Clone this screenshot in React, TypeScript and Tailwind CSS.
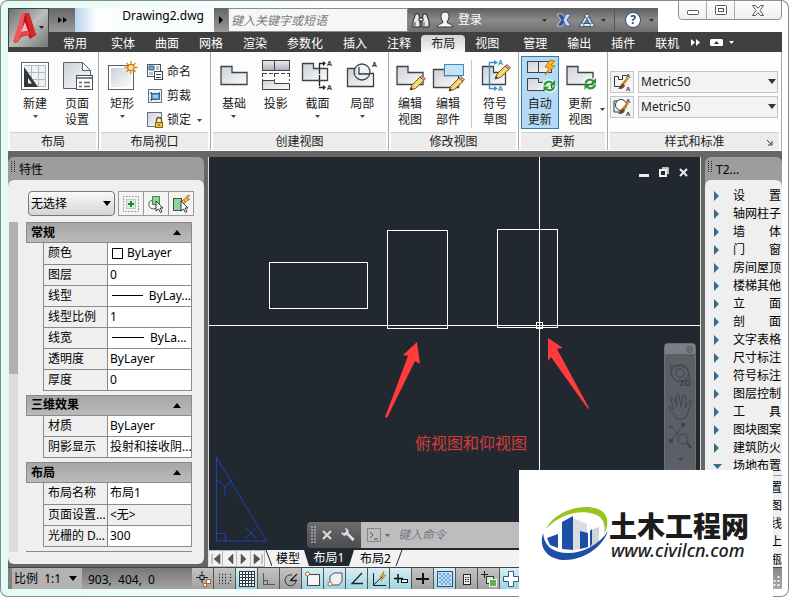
import type { ReactNode } from 'react';

// Tab groups of the ribbon; each group is set off by a small gap.
const TAB_GROUPS = [
  ['常用'],
  ['实体', '曲面', '网格', '渲染', '参数化', '插入', '注释', '布局', '视图'],
  ['管理', '输出', '插件', '联机'],
];
const ACTIVE_TAB = '布局';

interface Prop {
  name: string;
  value: string;
  mark?: 'box' | 'line';
  readOnly?: boolean;
}

const PROPERTY_GROUPS: { title: string; rows: Prop[] }[] = [
  {
    title: '常规',
    rows: [
      { name: '颜色', value: 'ByLayer', mark: 'box' },
      { name: '图层', value: '0' },
      { name: '线型', value: 'ByLay...', mark: 'line' },
      { name: '线型比例', value: '1' },
      { name: '线宽', value: 'ByLa...', mark: 'line' },
      { name: '透明度', value: 'ByLayer' },
      { name: '厚度', value: '0' },
    ],
  },
  {
    title: '三维效果',
    rows: [
      { name: '材质', value: 'ByLayer' },
      { name: '阴影显示', value: '投射和接收阴...' },
    ],
  },
  {
    title: '布局',
    rows: [
      { name: '布局名称', value: '布局1' },
      { name: '页面设置...', value: '<无>', readOnly: true },
      { name: '光栅的 D...', value: '300' },
    ],
  },
];

const TOOL_MENU = [
  '设置', '轴网柱子', '墙体', '门窗', '房间屋顶', '楼梯其他', '立面', '剖面',
  '文字表格', '尺寸标注', '符号标注', '图层控制', '工具', '图块图案', '建筑防火',
];
const SUB_MENU = ['置', '图', '线', '上', '瓶'];

function Caret({ className = 'fill-[#333]', up = false }: { className?: string; up?: boolean }) {
  return (
    <svg width="8" height="5" viewBox="0 0 8 5" className={className} aria-hidden="true">
      <path d={up ? 'M0 5h8L4 0z' : 'M0 0h8L4 5z'} />
    </svg>
  );
}

function SmallCaret({ className = 'fill-[#444]' }: { className?: string }) {
  return (
    <svg width="5" height="3" viewBox="0 0 5 3" className={className} aria-hidden="true">
      <path d="M0 0h5L2.5 3z" />
    </svg>
  );
}

/* ---------- ribbon icons ---------- */

function Icon({ children, size = 32 }: { children: ReactNode; size?: number }) {
  return (
    <svg width={size} height={size} viewBox={`0 0 ${size} ${size}`} fill="none" className="shrink-0 overflow-visible" aria-hidden="true">
      {children}
    </svg>
  );
}

function Block({ d }: { d: string }) {
  return <path d={d} fill="url(#steel)" stroke="#3f4348" strokeWidth="1.3" />;
}

function Pencil({ x, y }: { x: number; y: number }) {
  return (
    <g transform={`translate(${x} ${y})`}>
      <path d="M0 14l2-5L10 1l4 3.500-8.500 8z" fill="#f3cf62" stroke="#7a5a22" />
      <path d="M10 1l2-1.500 3.500 3L14 4.500z" fill="#d9a0a8" stroke="#7a5a22" strokeWidth=".8" />
      <path d="M4 10.500L12 3" stroke="#fdf0b4" />
      <path d="M0 14l1-3 2 2z" fill="#333" />
    </g>
  );
}

function Refresh({ x, y }: { x: number; y: number }) {
  return (
    <g transform={`translate(${x} ${y})`}>
      <path d="M1 5.500C1.500 1 7 0 10 3.500M11.500 6.500C11 11 5.500 12 2.500 8.500" stroke="#fff" strokeWidth="4" />
      <path d="M1.500 5.500C2 1.500 7 .5 9.500 3.500M11 6.500C10.500 10.500 5.500 11.500 3 8.500" stroke="#2d9a3a" strokeWidth="2.200" />
      <path d="M12 0v5.500H6.500zM.5 12V6.500H6z" fill="#2d9a3a" />
    </g>
  );
}

function Letter({ x, y, fill = '#33373b' }: { x: number; y: number; fill?: string }) {
  return (
    <text x={x} y={y} fontSize="7" fontWeight="700" fill={fill}>
      A
    </text>
  );
}

const NewLayoutIcon = () => (
  <Icon>
    <rect x="2.500" y="2.500" width="27" height="27" fill="#fff" stroke="#5b6066" />
    <rect x="5" y="5" width="22" height="22" fill="#f0f1f3" />
    <path d="M12.500 5v22M19.500 5v22M26.500 5v22M5 5.500h22M5 12.500h22M5 19.500h22M5 26.500h22" stroke="#b4b9c0" />
    <path d="M5 7v20h14z" fill="#33383e" />
    <path d="M9 18v5.500h4z" fill="#eef0f2" />
  </Icon>
);

const PageSetupIcon = () => (
  <Icon>
    <path d="M2.500 2.500h19l8 8v18h-27z" fill="url(#steel)" stroke="#5b6066" />
    <path d="M21.500 2.500v8h8z" fill="#fff" stroke="#5b6066" />
    <rect x="15.500" y="15.500" width="16" height="14" fill="#fff" stroke="#4a5058" />
    <path d="M16 17h15v2H16z" fill="#7d8590" />
    <path d="M18 22.500h3M18 26.500h3M23 22.500h6M23 26.500h6" stroke="#5b6570" strokeWidth="1.500" />
  </Icon>
);

const RectangleIcon = () => (
  <Icon>
    <rect x="2.500" y="5.500" width="25" height="24" fill="#fff" stroke="#5b6066" />
    <rect x="5" y="8" width="20" height="19" fill="url(#steel)" />
    <path d="M25 1v13M18.500 7.500h13M20.400 3l9.200 9M29.600 3l-9.200 9" stroke="#d98b1f" strokeWidth="1.300" />
    <circle cx="25" cy="7.500" r="3.200" fill="#ffe08a" stroke="#d07a14" strokeWidth="1.200" />
  </Icon>
);

const BaseIcon = () => (
  <Icon>
    <Block d="M3 6.500h11v6h15v12H3z" />
  </Icon>
);

const ProjectIcon = () => (
  <Icon>
    <rect x="2.500" y=".5" width="27" height="10" fill="url(#band)" stroke="#3f4348" />
    <path d="M14.500 1v9" stroke="#3f4348" />
    <path d="M3 13.500h26M2.500 13v8M29.500 13v8M14.500 13v7" stroke="#3f4348" strokeDasharray="4 2" />
    <path d="M2.500 20.500h12v3h15v6h-27z" fill="url(#steel)" stroke="#3f4348" />
  </Icon>
);

const SectionIcon = () => (
  <Icon>
    <Block d="M1.500 3.500h11v5h14v12h-25z" />
    <path d="M18.500 3v25" stroke="#222" strokeDasharray="5 1" strokeWidth="1.300" />
    <path d="M18 3.500h5M18 27.500h5" stroke="#222" strokeWidth="1.300" />
    <path d="M22 1l3 2.500-3 2.500zM22 25l3 2.500-3 2.500z" fill="#222" />
    <Letter x={26} y={6} />
    <Letter x={26} y={30} />
  </Icon>
);

const DetailIcon = () => (
  <Icon>
    <Block d="M1.500 8.500h8v5h18v13h-26z" />
    <circle cx="16" cy="12" r="8" fill="#eef0f3" fillOpacity=".8" stroke="#3f4348" strokeWidth="1.300" />
    <path d="M13 7v7h10" stroke="#3f4348" strokeWidth="1.300" />
    <Letter x={26} y={7} />
  </Icon>
);

const EditViewIcon = () => (
  <Icon>
    <Block d="M3 6.500h11v6h15v12H3z" />
    <Pencil x={16} y={16} />
  </Icon>
);

const EditPartIcon = () => (
  <Icon>
    <Block d="M1.500 9.500h11v6h14v12h-25z" />
    <rect x="12.500" y="4.500" width="19" height="11" fill="#c2e4f6" stroke="#3a8fb7" />
    <Pencil x={17} y={17} />
  </Icon>
);

const SymbolSketchIcon = () => (
  <Icon>
    <Block d="M3.500 6.500h11v6h12v12h-23z" />
    <path d="M16 2.500h-5.500v26H16" stroke="#3a95b8" strokeWidth="1.400" />
    <path d="M15 0l4 2.500-4 2.500zM15 26l4 2.500-4 2.500z" fill="#3a95b8" />
    <Letter x={19} y={5} fill="#3a95b8" />
    <Letter x={19} y={31} fill="#3a95b8" />
    <Pencil x={16} y={5} />
  </Icon>
);

const AutoUpdateIcon = () => (
  <Icon>
    <rect x="3.500" y="1.500" width="24" height="11" fill="url(#steel)" stroke="#3f4348" />
    <path d="M14.500 2v10" stroke="#3f4348" />
    <path d="M3.500 18.500h11v4h13v8h-24z" fill="url(#steel)" stroke="#3f4348" />
    <path d="M26 0l-5 7 4 1-4 7 10-9-4-1 4-4z" fill="#ffb21e" stroke="#b06a10" strokeWidth=".8" />
    <Refresh x={19} y={20} />
  </Icon>
);

const UpdateViewIcon = () => (
  <Icon>
    <Block d="M3 6.500h11v6h15v12H3z" />
    <Refresh x={20} y={18} />
  </Icon>
);

const NamedIcon = () => (
  <Icon size={16}>
    <rect x=".5" y=".5" width="13" height="12" fill="#fff" stroke="#4d545c" />
    <path d="M2 2h5v4H2z" fill="#5fb4e0" stroke="#2f5f88" />
    <path d="M9 2h3v4H9zM2 8h4v3H2z" fill="#b8bfc8" />
    <rect x="7.500" y="7.500" width="8" height="8" fill="#fff" stroke="#3f464e" />
    <path d="M9 10.500h5M9 13.500h5" stroke="#3f464e" />
  </Icon>
);

const ClipIcon = () => (
  <Icon size={16}>
    <rect x="1.500" y="1.500" width="13" height="13" fill="#eef1f4" stroke="#6a7078" />
    <path d="M3 5.500h10M3 11.500h8M4.500 4v9M12.500 4v8" stroke="#2f6a94" />
    <rect x="5" y="6" width="7" height="5" fill="#8fd0ee" stroke="#2f6a94" />
  </Icon>
);

const LockIcon = () => (
  <Icon size={16}>
    <rect x=".5" y=".5" width="14" height="14" fill="url(#steel)" stroke="#6a7078" />
    <path d="M9.500 10V8a2.500 2.500 0 0 1 5 0v2" stroke="#6b5a1c" strokeWidth="1.300" />
    <rect x="8.500" y="10.500" width="7" height="5" fill="#f2c53a" stroke="#7d6415" />
    <path d="M12 12v2" stroke="#4d3c08" />
  </Icon>
);

function StyleIcon({ round }: { round?: boolean }) {
  return (
    <Icon size={20}>
      {round ? (
        <>
          <path d="M2 4h4M2 4v11h6" stroke="#33373b" />
          <circle cx="9" cy="8" r="5.500" stroke="#33373b" fill="#fff" />
        </>
      ) : (
        <path d="M2.500 4.500h4v3h4v-4h4M2.500 4.500v10h6" stroke="#33373b" />
      )}
      <text x="14" y="6" fontSize="6" fontWeight="700" fill="#33373b">A</text>
      <text x="14" y="19" fontSize="6" fontWeight="700" fill="#33373b">A</text>
      <path d="M16 6l-6 7" stroke="#c5862b" strokeWidth="2.500" />
      <path d="M11 11.500l2 2c-1 3-4 4-7 3 2-1 2-4 5-5z" fill="#6e4a22" />
    </Icon>
  );
}

/* ---------- ribbon ---------- */

interface BigButtonProps {
  icon: ReactNode;
  lines: string[];
  menu?: boolean;
  className?: string;
}

function BigButton({ icon, lines, menu, className = 'w-[42px]' }: BigButtonProps) {
  return (
    <button className={`flex flex-col items-center ${className}`}>
      <span className="mb-1">{icon}</span>
      {lines.map((l) => (
        <span key={l} className="h-4 leading-4">
          {l}
        </span>
      ))}
      {menu && (
        <span className="flex h-4 items-center pb-2">
          <SmallCaret />
        </span>
      )}
    </button>
  );
}

function Panel({ title, className, launcher, children }: { title: string; className: string; launcher?: boolean; children: ReactNode }) {
  return (
    <section className={`flex shrink-0 flex-col border-r border-[#a9a9a9] px-0.5 ${className}`}>
      <div className="flex h-20 items-start pt-2">{children}</div>
      <h2 className="relative h-[18px] border-t border-[#cfcfcf] bg-[#ececec] text-center leading-[18px]">
        {title}
        {launcher && (
          <svg width="7" height="7" viewBox="0 0 7 7" className="absolute right-1.5 top-1.5" aria-hidden="true">
            <path d="M1 1l4 4M6 2v4H2" fill="none" stroke="#333" />
          </svg>
        )}
      </h2>
    </section>
  );
}

function SmallCommand({ icon, label, menu }: { icon: ReactNode; label: string; menu?: boolean }) {
  return (
    <button className="flex h-6 items-center">
      {icon}
      <span className="ml-1">{label}</span>
      {menu && (
        <span className="ml-1.5">
          <SmallCaret />
        </span>
      )}
    </button>
  );
}

function StyleRow({ label, round }: { label: string; round?: boolean }) {
  return (
    <div className="flex h-[22px] gap-1">
      <button aria-label={label} className="flex w-6 items-center justify-center border border-[#c4c4c4] bg-[#f4f4f4]">
        <StyleIcon round={round} />
      </button>
      <div className="relative flex-1">
        <select aria-label={label} className="h-full w-full appearance-none border border-[#c4c4c4] bg-[#f3f3f3] pl-0.5">
          <option>Metric50</option>
        </select>
        <span className="pointer-events-none absolute right-0.5 top-2 flex">
          <Caret />
        </span>
      </div>
    </div>
  );
}

function Ribbon() {
  return (
    <div className="flex bg-[#fdfdfd] pb-px text-[#222]">
      <Panel title="布局" className="w-[91px]">
        <div className="flex pl-1">
          <BigButton icon={<NewLayoutIcon />} lines={['新建']} menu />
          <BigButton icon={<PageSetupIcon />} lines={['页面', '设置']} />
        </div>
      </Panel>
      <Panel title="布局视口" className="w-28">
        <BigButton icon={<RectangleIcon />} lines={['矩形']} menu />
        <div className="ml-1 flex flex-col">
          <SmallCommand icon={<NamedIcon />} label="命名" />
          <SmallCommand icon={<ClipIcon />} label="剪裁" />
          <SmallCommand icon={<LockIcon />} label="锁定" menu />
        </div>
      </Panel>
      <Panel title="创建视图" className="w-[178px]">
        <BigButton icon={<BaseIcon />} lines={['基础']} menu />
        <BigButton icon={<ProjectIcon />} lines={['投影']} />
        <BigButton icon={<SectionIcon />} lines={['截面']} menu />
        <BigButton icon={<DetailIcon />} lines={['局部']} menu className="w-12" />
      </Panel>
      <Panel title="修改视图" className="w-[130px]">
        <BigButton icon={<EditViewIcon />} lines={['编辑', '视图']} className="w-[38px]" />
        <BigButton icon={<EditPartIcon />} lines={['编辑', '部件']} className="w-[38px]" />
        <span className="mx-1 h-[68px] border-l border-[#c8c8c8]" />
        <BigButton icon={<SymbolSketchIcon />} lines={['符号', '草图']} className="w-[38px]" />
      </Panel>
      <Panel title="更新" className="w-[89px]">
        <BigButton
          icon={<AutoUpdateIcon />}
          lines={['自动', '更新']}
          className="-mt-1 h-[73px] w-[38px] border border-[#2f7fa6] bg-[#b5daf5] pt-[3px]"
        />
        <BigButton icon={<UpdateViewIcon />} lines={['更新', '视图']} className="ml-0.5 w-10" />
        <span className="mt-12">
          <SmallCaret />
        </span>
      </Panel>
      <Panel title="样式和标准" className="min-w-0 flex-1 shrink" launcher>
        <div className="flex flex-1 flex-col gap-[3px] pr-px pt-[11px]">
          <StyleRow label="截面视图样式" />
          <StyleRow label="局部视图样式" round />
        </div>
      </Panel>
    </div>
  );
}

/* ---------- header ---------- */

function InfoBar() {
  return (
    <div className="flex h-6 w-[250px] shrink-0 items-center bg-linear-to-b from-[#5f5f5f] via-[#8a8a8a] to-[#707070] pl-1 text-white">
      <button aria-label="搜索">
        <svg width="18" height="16" viewBox="0 0 18 16" aria-hidden="true">
          <path d="M3 2h4v2l1 3v8H1V9l2-5zM11 2h4v2l2 5v6h-7V7l1-3z" fill="#e8e8e8" stroke="#222" />
          <path d="M7 6h4v3H7z" fill="#e8e8e8" stroke="#222" />
          <path d="M3 10v4M12 10v4" stroke="#444" />
        </svg>
      </button>
      <button className="ml-1.5 flex items-center gap-1">
        <svg width="18" height="18" viewBox="0 0 18 18" aria-hidden="true">
          <path d="M9 1c3 0 4 2 4 4.500S11.500 10 11 11c0 2 5 1.500 6 5H1c1-3.500 6-3 6-5-.5-1-2-3-2-5.500S6 1 9 1z" fill="#f4f6f8" stroke="#333" />
        </svg>
        登录
      </button>
      <span className="ml-[60px]">
        <SmallCaret className="fill-[#333]" />
      </span>
      <button aria-label="Exchange" className="ml-2.5">
        <svg width="14" height="14" viewBox="0 0 14 14" aria-hidden="true">
          <path d="M0 1h5l3 4v4l-3 4H0l4-6z" fill="#2d4f9e" stroke="#fff" strokeWidth=".6" />
          <path d="M14 1H9L6 7l3 6h5l-4-6z" fill="#c9d9f5" stroke="#2d4f9e" strokeWidth=".8" />
        </svg>
      </button>
      <button aria-label="连接" className="ml-2 flex items-center gap-1.5">
        <svg width="16" height="15" viewBox="0 0 16 15" aria-hidden="true">
          <path d="M8 3L3 12h10z" fill="none" stroke="#2f4a70" strokeWidth="3.500" />
          <path d="M8 3L3 12h10z" fill="none" stroke="#e4eefb" strokeWidth="1.800" />
          <circle cx="8" cy="3" r="2" fill="#e4eefb" stroke="#2f4a70" strokeWidth=".8" />
          <circle cx="3" cy="12" r="2" fill="#e4eefb" stroke="#2f4a70" strokeWidth=".8" />
          <circle cx="13" cy="12" r="2" fill="#e4eefb" stroke="#2f4a70" strokeWidth=".8" />
        </svg>
        <SmallCaret className="fill-[#333]" />
      </button>
      <span className="mx-2 h-5 border-l border-[#555]" />
      <button aria-label="帮助" className="ml-0.5 flex items-center gap-2">
        <span className="flex size-4 items-center justify-center rounded-full border border-[#2c4c74] bg-white text-xs font-bold leading-3 text-[#23528c]">
          ?
        </span>
        <SmallCaret className="fill-[#333]" />
      </button>
    </div>
  );
}

function WindowControls() {
  const cls = 'flex items-center justify-center';
  return (
    <div className="ml-5 flex h-5 w-[104px] shrink-0 self-start rounded-b border border-[#8f8f8f] bg-linear-to-b from-[#fdfdfd] to-[#f0f0f0]">
      <button aria-label="最小化" className={`${cls} w-7 border-r border-[#aaa]`}>
        <svg width="12" height="5" viewBox="0 0 12 5" className="mt-1"><rect x=".5" y=".5" width="11" height="4" rx="1" fill="#fff" stroke="#555" /></svg>
      </button>
      <button aria-label="最大化" className={`${cls} w-7 border-r border-[#aaa]`}>
        <svg width="12" height="10" viewBox="0 0 12 10">
          <rect x=".5" y=".5" width="11" height="9" rx="1" fill="#fff" stroke="#555" />
          <rect x="3.500" y="3.500" width="5" height="3" fill="#fff" stroke="#555" />
        </svg>
      </button>
      <button aria-label="关闭" className={`${cls} flex-1`}>
        <svg width="12" height="11" viewBox="0 0 12 11">
          <path d="M.5.5h3L6 3.300 8.500.5h3L8 5.500l3.500 5h-3L6 7.700 3.500 10.500h-3L4 5.500z" fill="#fff" stroke="#555" />
        </svg>
      </button>
    </div>
  );
}

function Header() {
  return (
    <header className="flex">
      <div className="bg-linear-to-b from-transparent from-60% to-[#404040] to-60% pt-2">
        <button aria-label="应用程序菜单" className="flex h-10 w-[41px] items-center border border-[#444] bg-linear-to-br from-[#6f6f6f] via-[#bdbdbd] to-[#777] pb-px pl-1">
          <svg width="24" height="32" viewBox="0 0 24 32" className="shrink-0" aria-hidden="true">
            <path d="M9 1h7l7 22-6 4-2-4-7 2-3 5-4 1z" fill="#b3141c" />
            <path d="M9 1h3L9 19l-3 9-3 3-3-2z" fill="#f0565a" />
            <path d="M12 1h4l7 22-5 2z" fill="#d8262d" />
            <path d="M12 10l3 9-7 1z" fill="#f7b9b9" />
            <path d="M8 20l8-1 1 3-10 3z" fill="#ef4247" />
          </svg>
          <span className="ml-0.5">
            <SmallCaret className="fill-[#222]" />
          </span>
        </button>
      </div>
      <div className="flex min-w-0 flex-1 flex-col">
        <div className="flex h-8 items-end">
          <button aria-label="快速访问工具栏" className="flex h-6 w-[26px] items-center justify-center bg-linear-to-b from-[#666] to-[#999]">
            <svg width="9" height="6" viewBox="0 0 9 6"><path d="M0 0l4 3-4 3zM5 0l4 3-4 3z" fill="#000" /></svg>
          </button>
          <h1 className="h-6 min-w-0 flex-1 bg-linear-to-r from-[#b9d3ea] via-[#fbfdfe] via-15% to-[#f6fbfb] pr-2.5 text-right leading-4 text-black">Drawing2.dwg</h1>
          <button aria-label="展开" className="flex h-6 w-3.5 items-center justify-center bg-linear-to-b from-[#666] to-[#999]">
            <svg width="4" height="8" viewBox="0 0 4 8"><path d="M0 0l4 4-4 4z" fill="#000" /></svg>
          </button>
          <input
            aria-label="搜索"
            placeholder="键入关键字或短语"
            className="h-6 w-[180px] border border-[#8c8c8c] bg-[#f6f6f6] px-0.5 italic placeholder:text-[#777]"
          />
          <InfoBar />
          <WindowControls />
        </div>
        <nav className="flex h-5 gap-1 bg-[#404040] pl-1 text-white">
          {TAB_GROUPS.map((group) => (
            <div key={group[0]} className="flex items-end">
              {group.map((tab) => (
                <button
                  key={tab}
                  className={
                    tab === ACTIVE_TAB
                      ? 'h-[17px] rounded-t-sm bg-linear-to-b from-[#d2d2d2] to-[#fafafa] px-2.5 leading-[18px] text-[#222]'
                      : 'h-[17px] px-2.5 leading-[18px]'
                  }
                >
                  {tab}
                </button>
              ))}
            </div>
          ))}
          <div className="-ml-1.5 flex items-center gap-2.5 pl-1">
            <svg width="9" height="7" viewBox="0 0 9 7" className="fill-white"><path d="M0 0l4 3.500L0 7zM5 0l4 3.500L5 7z" /></svg>
            <svg width="13" height="7" viewBox="0 0 13 7"><rect width="13" height="7" rx="1.500" fill="#fff" /><path d="M4 5h5L6.500 2z" fill="#333" /></svg>
            <SmallCaret className="-ml-1 fill-white" />
          </div>
        </nav>
      </div>
    </header>
  );
}

/* ---------- palettes ---------- */

function PaletteTitle({ children }: { children: ReactNode }) {
  return (
    <div className="-mb-1 flex h-[27px] items-start rounded-t-md bg-[#9d9d9d] px-[3px] pt-1 text-black">
      <svg width="4" height="12" viewBox="0 0 4 12" aria-hidden="true">
        <path d="M.5 0v12M3.500 0v12" stroke="#222" strokeDasharray="1 1" />
      </svg>
      <h2 className="ml-1 leading-[18px]">{children}</h2>
    </div>
  );
}

function PropertyValue({ row }: { row: Prop }) {
  return (
    <span className="flex items-center whitespace-nowrap">
      {row.mark === 'box' && <span className="ml-0.5 mr-1 size-[11px] border border-black" />}
      {row.mark === 'line' && <span className="ml-0.5 mr-1.5 w-8 border-t border-black" />}
      {row.value}
    </span>
  );
}

function SelectionButton({ label, children }: { label: string; children: ReactNode }) {
  return (
    <button aria-label={label} className="flex flex-1 items-center justify-center border-r border-[#9a9a9a] last:border-r-0">
      <svg width="18" height="18" viewBox="0 0 18 18" fill="none" aria-hidden="true">
        {children}
      </svg>
    </button>
  );
}

function PropertiesPalette() {
  const cursor = 'M9 6v10l2.500-2 2 3.500 1.500-1-2-3.500h3z';
  return (
    <aside className="flex w-[196px] flex-col pb-[3px]">
      <PaletteTitle>特性</PaletteTitle>
      <div className="flex min-h-0 flex-1 flex-col rounded-md bg-[#efefef] pb-3 pt-[11px]">
        <div className="ml-5 flex h-[25px] gap-[3px]">
          <div className="relative w-[87px]">
            <select aria-label="选择对象" className="h-full w-full appearance-none rounded-sm border border-[#777] bg-linear-to-b from-[#fafafa] to-[#d4d4d4] pl-0.5 text-black">
              <option>无选择</option>
            </select>
            <span className="pointer-events-none absolute right-1 top-2.5 flex">
              <Caret className="fill-black" />
            </span>
          </div>
          <div className="flex w-[76px] border border-[#9a9a9a] bg-[#f4f4f4]">
            <SelectionButton label="切换 PICKADD">
              <rect x="1.500" y="1.500" width="15" height="15" stroke="#555" strokeDasharray="1 2" />
              <rect x="4.500" y="4.500" width="9" height="9" fill="#d8f0d8" stroke="#999" strokeDasharray="1 1" />
              <path d="M9 6v6M6 9h6" stroke="#1c8a32" strokeWidth="2" />
            </SelectionButton>
            <SelectionButton label="选择对象">
              <path d="M6 5a4.500 4.500 0 1 0 4 7" stroke="#555" />
              <rect x="5.500" y="1.500" width="7" height="8" fill="#8fd39b" stroke="#3f8f4c" />
              <path d={cursor} fill="#fff" stroke="#222" strokeWidth=".9" />
            </SelectionButton>
            <SelectionButton label="快速选择">
              <rect x="1.500" y="3.500" width="8" height="12" fill="#8fd39b" stroke="#3a5a40" />
              <path d="M16 0l-6 6h3l-3 4 8-6h-3l3-4z" fill="#f7b13a" stroke="#b06a10" strokeWidth=".7" />
              <path d={cursor} fill="#fff" stroke="#222" strokeWidth=".9" />
            </SelectionButton>
          </div>
        </div>
        <div className="mt-1.5 flex min-h-0 flex-1">
          <div className="ml-px w-[9px] shrink-0 bg-[#dcdcdc]">
            <div className="h-[46%] bg-[#b0b0b0]" />
          </div>
          <div className="ml-2 flex w-[166px] flex-col gap-1 overflow-hidden text-black">
            {PROPERTY_GROUPS.map((group) => (
              <section key={group.title}>
                <h3 className="flex h-[21px] items-center justify-between border border-[#8a8a8a] bg-linear-to-b from-[#a6a6a6] to-[#bababa] pl-1 pr-2.5 font-bold">
                  {group.title}
                  <Caret up className="fill-black" />
                </h3>
                <table className="ml-[17px] w-[149px] table-fixed border-collapse">
                  <tbody>
                    {group.rows.map((row) => (
                      <tr key={row.name} className="h-[21px]">
                        <th className="w-16 overflow-hidden whitespace-nowrap border border-t-0 border-[#8a8a8a] p-0 pl-1 text-left font-normal leading-4">
                          {row.name}
                        </th>
                        <td className={`overflow-hidden border border-t-0 border-[#8a8a8a] p-0 pl-0.5 leading-4 ${row.readOnly ? 'bg-[#efefef]' : 'bg-white'}`}>
                          <PropertyValue row={row} />
                        </td>
                      </tr>
                    ))}
                  </tbody>
                </table>
              </section>
            ))}
            <div className="h-[21px] shrink-0 border border-[#8a8a8a] bg-[#a6a6a6]" />
          </div>
        </div>
      </div>
    </aside>
  );
}

function MenuArrow({ open }: { open?: boolean }) {
  return (
    <span className="flex w-5 shrink-0">
      <svg width="9" height="10" viewBox="0 0 9 10" className="fill-[#3b6c86]" aria-hidden="true">
        <path d={open ? 'M0 3h9L4.500 8z' : 'M1 0l5 5-5 5z'} />
      </svg>
    </span>
  );
}

function ToolPalette() {
  const rowClass = 'flex h-[18px] w-full items-center pl-2 leading-4';
  return (
    <aside className="flex w-[77px] flex-col overflow-hidden">
      <PaletteTitle>T2...</PaletteTitle>
      <div className="min-h-0 flex-1 overflow-hidden rounded-t-md bg-[#efefef] pt-[7px] text-black">
        {TOOL_MENU.map((item) => (
          <button key={item} className={rowClass}>
            <MenuArrow />
            <span className="flex w-12 shrink-0 justify-between">
              {Array.from(item).map((c, i) => (
                <span key={i}>{c}</span>
              ))}
            </span>
          </button>
        ))}
        <button className={rowClass}>
          <MenuArrow open />
          <span className="shrink-0">场地布置</span>
        </button>
        <div className="border-t border-[#999] pt-[3px]">
          {SUB_MENU.map((item) => (
            <button key={item} className="block h-[18px] w-full text-right leading-4">
              {item}
            </button>
          ))}
        </div>
      </div>
    </aside>
  );
}

/* ---------- drawing area ---------- */

function Drawing() {
  return (
    <svg className="absolute inset-0 h-full w-full" fill="none" aria-hidden="true">
      <g stroke="#fff" shapeRendering="crispEdges">
        <rect x="60.500" y="105.500" width="98" height="46" />
        <rect x="178.500" y="73.500" width="60" height="98" />
        <rect x="288.500" y="72.500" width="60" height="98" />
        <path d="M0 168.500h3000M330.500 0v3000" />
        <rect x="327.500" y="165.500" width="6" height="6" />
      </g>
      <path d="M208 185l-14 13 5 1-23 61 2 1 28-57 5 3z" fill="#ff3b3b" />
      <path d="M339 181l15 10-6 1 32 59-1 1-37-52-3 4z" fill="#ff3b3b" />
      <g stroke="#1b41b8">
        <path d="M7.500 300v84h50z" />
        <path d="M7.500 376.500h9v8M7 322l9 8 8-8M16 330v8M36 370l12 12M48 370l-12 12" />
      </g>
    </svg>
  );
}

function NavigationBar() {
  return (
    <div className="absolute right-1 top-[186px] flex h-40 w-8 flex-col items-center rounded-t border border-[#6b6f75] bg-[#5b5f66]">
      <div className="flex h-2.5 w-full items-center justify-end bg-[#7b7e83] pr-0.5">
        <svg width="7" height="7" viewBox="0 0 7 7" fill="none" stroke="#4e5258"><circle cx="3.500" cy="3.500" r="3" /><path d="M2 2l3 3M5 2L2 5" /></svg>
      </div>
      <svg width="26" height="96" viewBox="0 0 26 96" fill="none" stroke="#41454b" className="mt-2">
        <path d="M2 4h12a8 8 0 0 1 8 8v5M4 4v9" />
        <circle cx="13" cy="11" r="8.500" />
        <circle cx="13" cy="11" r="4.500" />
        <text x="12" y="24" fontSize="9" fontWeight="700" fill="#41454b" stroke="none">2D</text>
        <path d="M8 54c-2-4-5-6-6-9 1-1 3 0 5 3L4 37c0-2 2-2 3 0l3 8-1-12c1-2 3-1 3 0l2 12 2-11c1-2 3-1 3 1l-1 11 4-7c2-1 3 0 2 2l-4 12-3 4H9z" />
        <path d="M3 64l10 10M16 63L4 79M3 64h3M3 64v3" />
        <rect x="14.500" y="61.500" width="3" height="3" fill="#41454b" />
        <rect x="2.500" y="77.500" width="3" height="3" fill="#41454b" />
        <circle cx="16" cy="77" r="5" />
        <path d="M20 81l4 5" strokeWidth="2.500" />
      </svg>
      <SmallCaret className="fill-[#41454b]" />
    </div>
  );
}

function CommandLine() {
  return (
    <div className="absolute bottom-0.5 left-[98px] right-0 flex h-[26px]">
      <div className="flex w-[54px] items-center rounded-l-sm bg-linear-to-b from-[#6d6d6f] to-[#4b4c4f] pl-1">
        <svg width="5" height="18" viewBox="0 0 5 18"><path d="M1 0v18M4 0v18" stroke="#aaa" strokeWidth="1.500" strokeDasharray="2 1" /></svg>
        <button aria-label="关闭" className="ml-1.5">
          <svg width="10" height="10" viewBox="0 0 10 10"><path d="M1 1l8 8M9 1L1 9" stroke="#ddd" strokeWidth="2" /></svg>
        </button>
        <button aria-label="自定义" className="ml-2">
          <svg width="16" height="16" viewBox="0 0 16 16">
            <path d="M4 1a4 4 0 0 1 5 5l6 6-2.500 2.500L7 8.500A4 4 0 0 1 1 4l3 2 2-2z" fill="#d8dbe0" stroke="#444" strokeWidth=".6" />
          </svg>
        </button>
      </div>
      <label className="flex flex-1 items-center bg-[#bdbdc0] pl-1.5">
        <svg width="14" height="14" viewBox="0 0 14 14" fill="none" stroke="#555"><rect x=".5" y=".5" width="13" height="13" stroke="#888" /><path d="M3 4l3 3-3 3M7 11h4" /></svg>
        <span className="ml-1 mr-2"><SmallCaret className="fill-[#666]" /></span>
        <input aria-label="键入命令" placeholder="键入命令" className="min-w-0 flex-1 italic placeholder:text-[#77777a]" />
      </label>
    </div>
  );
}

function LayoutTabs() {
  const nav = [
    ['首个', 'M2 1v10M10 1L4 6l6 5z'],
    ['上一个', 'M9 1L4 6l5 5z'],
    ['下一个', 'M3 1l5 5-5 5z'],
    ['末个', 'M10 1v10M2 1l6 5-6 5z'],
  ];
  return (
    <div className="flex h-[17px] bg-[#f2f2f2] text-black">
      {nav.map(([label, d]) => (
        <button key={label} aria-label={label} className="flex w-3.5 items-center justify-center border border-l-0 border-[#bbb]">
          <svg width="12" height="12" viewBox="0 0 12 12" className="shrink-0 fill-[#555]"><path d={d} stroke="#555" strokeWidth=".6" /></svg>
        </button>
      ))}
      <svg width="7" height="16" viewBox="0 0 7 16" aria-hidden="true"><path d="M1 0l6 16" stroke="#222" /></svg>
      <button className="px-1 leading-4">模型</button>
      <div className="flex h-4 w-[50px] items-center justify-center bg-[#212830] text-white [clip-path:polygon(0_0,100%_0,90%_100%,10%_100%)]">
        <button className="leading-4">布局1</button>
      </div>
      <button className="ml-1 px-0.5 leading-4">布局2</button>
      <svg width="10" height="16" viewBox="0 0 10 16" aria-hidden="true"><path d="M9 0L3 16" stroke="#222" /></svg>
    </div>
  );
}

function Canvas() {
  return (
    <main className="ml-1 mr-1 flex min-w-0 flex-1 flex-col border-x border-[#ddd]">
      <div className="relative min-h-0 flex-1 overflow-hidden bg-[#212830]">
        <Drawing />
        <p className="absolute left-[206px] top-[274px] text-base leading-6 text-[#d23c3c]">俯视图和仰视图</p>
        <div className="absolute right-3 top-2.5 flex items-center gap-2.5">
          <button aria-label="最小化"><svg width="10" height="10" viewBox="0 0 10 10"><path d="M0 8.500h10" stroke="#eee" strokeWidth="3" /></svg></button>
          <button aria-label="还原">
            <svg width="10" height="10" viewBox="0 0 10 10" fill="none" stroke="#eee"><path d="M3 1h6v6" strokeWidth="1.500" /><rect x="1" y="3" width="6" height="6" strokeWidth="2" /></svg>
          </button>
          <button aria-label="关闭"><svg width="9" height="9" viewBox="0 0 9 9"><path d="M1 1l7 7M8 1L1 8" stroke="#eee" strokeWidth="2" /></svg></button>
        </div>
        <NavigationBar />
        <CommandLine />
      </div>
      <LayoutTabs />
    </main>
  );
}

/* ---------- status bar ---------- */

const STATUS_ICONS: { label: string; on?: boolean; art: ReactNode }[] = [
  { label: '推断约束', art: <><path d="M7 0v12M1 6.500h12" stroke="#222" /><rect x="5" y="4.500" width="4" height="4" fill="#8ab4d8" stroke="#222" /><rect x="11.500" y="8.500" width="4" height="4" fill="#fff" stroke="#b5652a" /><rect x="8.500" y="12.500" width="3" height="3" fill="#fff" stroke="#b5652a" /></> },
  { label: '捕捉', art: <path d="M2 3.500h9M2 6.500h9M2 9.500h9M2 12.500h12M13.500 3v9" stroke="#333" strokeDasharray="1 2" strokeWidth="1.500" /> },
  { label: '栅格', on: true, art: <><path d="M0 0h16v16H0z" fill="#f4f8fa" /><path d="M.5 0v16M3.500 0v16M6.500 0v16M9.500 0v16M12.500 0v16M15.500 0v16M0 .5h16M0 3.500h16M0 6.500h16M0 9.500h16M0 12.500h16M0 15.500h16" stroke="#333844" /></> },
  { label: '正交', art: <path d="M2.500 2v11.500H14M2.500 9.500h4v4" stroke="#555" /> },
  { label: '极轴', art: <><path d="M13 9a5.500 5.500 0 1 1-4-5" stroke="#333" /><path d="M8 9l6-6M7 9.500h7" stroke="#222" strokeWidth="1.300" /></> },
  { label: '对象捕捉', on: true, art: <><rect x="2.500" y="3.500" width="12" height="11" fill="#f4f4f4" stroke="#444" /><circle cx="2.500" cy="3" r="2" fill="#fff" stroke="#b5652a" /></> },
  { label: '三维对象捕捉', on: true, art: <><path d="M3 5l4-3h8v8l-3 4H3z" fill="#f0f0f0" stroke="#555" /><circle cx="3" cy="13" r="2" fill="#fff" stroke="#b5652a" /></> },
  { label: '对象追踪', on: true, art: <path d="M13 2L3 12.500h11" stroke="#222" strokeWidth="1.300" /> },
  { label: '动态 UCS', on: true, art: <><path d="M2.500 2v12.500H15M2.500 14L11 6" stroke="#222" /><path d="M13 0L9 6h3l-2 4 5-6h-3z" fill="#f4a81c" stroke="#a56710" strokeWidth=".5" /></> },
  { label: '动态输入', on: true, art: <><path d="M5 3v9M1 7.500h9" stroke="#111" strokeWidth="1.500" /><rect x="8.500" y="8.500" width="6" height="3" fill="#fff" stroke="#111" /></> },
  { label: '线宽', art: <path d="M8 2v11M1 8h13" stroke="#111" strokeWidth="2" /> },
  { label: '透明度', on: true, art: <><rect x=".5" y=".5" width="15" height="15" fill="#c4e3f5" stroke="#2a4f78" /><path d="M2 3h12M2 7h12M2 11h12" stroke="#6fa8d6" strokeDasharray="2 2" strokeWidth="2" /><path d="M4 5h10M4 9h10M4 13h10" stroke="#6fa8d6" strokeDasharray="2 2" strokeWidth="2" /></> },
  { label: '快捷特性', art: <><rect x="4.500" y="3.500" width="7" height="10" fill="#eee" stroke="#222" /><path d="M6 6.500h4M6 8.500h4M6 10.500h4" stroke="#222" strokeDasharray="1.500 1" /></> },
  { label: '选择循环', art: <><path d="M3.500 0v7M0 3.500h7" stroke="#222" /><rect x="5.500" y="5.500" width="7" height="7" fill="#d8efd8" stroke="#333" /><rect x="8.500" y="8.500" width="7" height="7" fill="#5fb54d" stroke="#eee" /></> },
  { label: '注释监视器', on: true, art: <path d="M5.500.5h5v5h5v5h-5v5h-5v-5h-5v-5h5z" fill="#fff" stroke="#2f5f80" /> },
];

function StatusBar() {
  return (
    <footer className="flex h-[22px] border-t border-[#444] bg-[#b3b3b3] text-black">
      <button className="flex w-[74px] items-center gap-2 whitespace-nowrap border-l-4 border-[#808080] pl-0.5">
        <span>比例&nbsp; 1:1</span>
        <Caret className="fill-black" />
      </button>
      <output className="w-[110px] bg-linear-to-b from-[#777] to-[#a3a3a3] pl-1.5 pt-0.5 leading-5">903,&nbsp; 404,&nbsp; 0</output>
      {STATUS_ICONS.map(({ label, on, art }) => (
        <button
          key={label}
          aria-label={label}
          className={`flex w-[22px] shrink-0 items-center justify-center border-r border-[#555] ${on ? 'bg-linear-to-b from-[#d8eef5] to-[#9fd3e2]' : 'bg-linear-to-b from-[#c4c4c4] to-[#a2a2a2]'}`}
        >
          <svg width="16" height="16" viewBox="0 0 16 16" fill="none" className="shrink-0" aria-hidden="true">
            {art}
          </svg>
        </button>
      ))}
      <span className="flex flex-1 items-end justify-end bg-linear-to-b from-[#888] to-[#a8a8a8] p-0.5">
        <svg width="8" height="11" viewBox="0 0 8 11"><path d="M6.500 0v11M2.500 4v7" stroke="#eee" strokeWidth="2" strokeDasharray="2 2" /></svg>
      </span>
    </footer>
  );
}

function Watermark() {
  return (
    <div className="absolute bottom-0 right-4 flex h-[127px] w-[254px] items-center bg-white pl-[22px]">
      <svg width="68" height="56" viewBox="0 0 68 56" className="shrink-0" aria-hidden="true">
        <path d="M5 23C14 5 40-3 57 3c10 4 12 14 6 25 2-10-1-17-10-20C38 3 18 9 5 23z" fill="#96c51f" />
        <path d="M32 12l14 6v24l-14 2z" fill="#d9dce0" />
        <path d="M49 24l9-3v16l-9 5z" fill="#d0d4da" />
        <path d="M21 16l11-6v34l-11-1z" fill="#1d4fa5" />
        <path d="M6 32l11-4v14l-8-3z" fill="#1d4fa5" />
        <path d="M39 25l8 2v14l-8 2z" fill="#1d4fa5" />
        <path d="M49 25l2-2v15l-2 3z" fill="#1d4fa5" />
        <path d="M2 27c-5 16 6 27 22 27 18 0 37-12 43-29-9 14-25 22-40 22C12 47 3 40 2 27z" fill="#1d4fa5" />
      </svg>
      <div className="whitespace-nowrap pt-1 text-[#1c1c1c]">
        <p className="text-[28px] font-black leading-7">土木工程网</p>
        <p className="pl-0.5 text-lg font-medium italic leading-5">www.civilcn.com</p>
      </div>
    </div>
  );
}

export default function App() {
  return (
    <div className="relative flex h-screen w-full flex-col overflow-hidden rounded-lg bg-linear-to-r from-[#e4fbf6] via-white to-white pb-2 pl-2 pr-[7px] text-xs shadow-[inset_0_0_0_1px_#8a8a8a] [font-family:'Noto_Sans','Noto_Sans_CJK_SC',sans-serif]">
      <svg width="0" height="0" className="absolute" aria-hidden="true">
        <defs>
          <linearGradient id="steel" x1="0" y1="0" x2="1" y2="1">
            <stop offset="0" stopColor="#cdd1d8" />
            <stop offset="1" stopColor="#fafbfc" />
          </linearGradient>
          <linearGradient id="band" x1="0" y1="0" x2="0" y2="1">
            <stop offset="0" stopColor="#eceef1" />
            <stop offset="1" stopColor="#a9afb8" />
          </linearGradient>
        </defs>
      </svg>
      <Header />
      <Ribbon />
      <div className="flex min-h-0 flex-1 bg-[#666] pt-1.5">
        <PropertiesPalette />
        <Canvas />
        <ToolPalette />
      </div>
      <StatusBar />
      <Watermark />
    </div>
  );
}
